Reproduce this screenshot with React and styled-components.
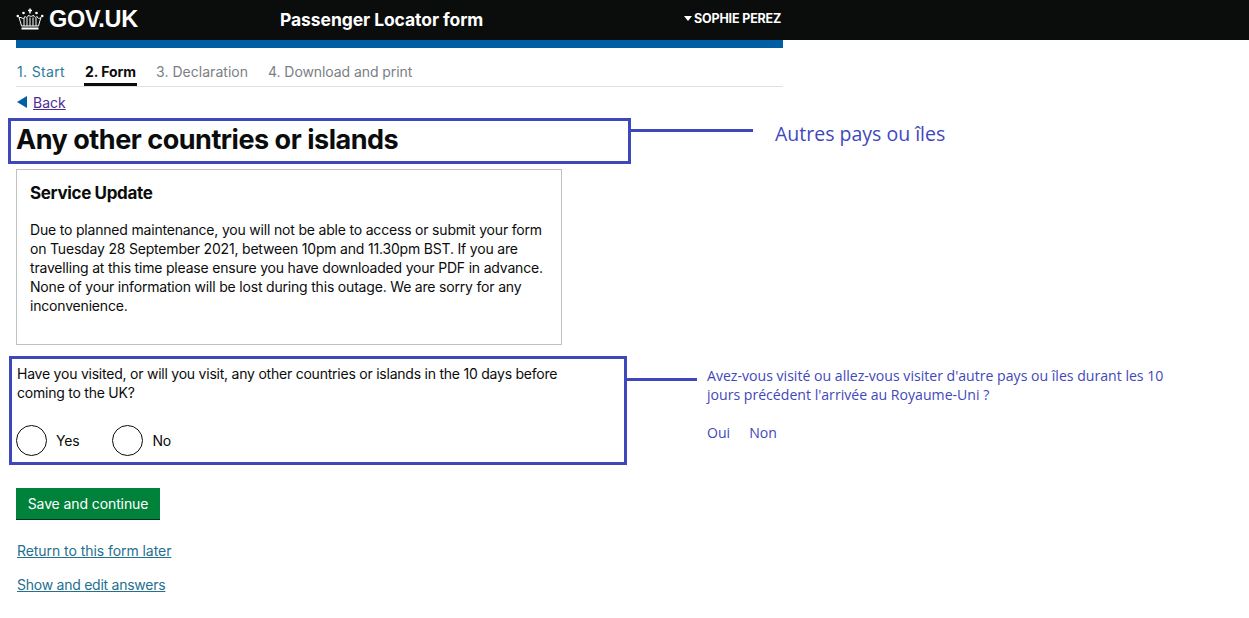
import styled, { createGlobalStyle } from "styled-components";

const GlobalStyle = createGlobalStyle`
  html, body { margin: 0; padding: 0; background: #fff; }
  body { font-family: "Inter", "Liberation Sans", sans-serif; color: #0b0c0c; }
`;

const Page = styled.div`
  position: relative;
  width: 1249px;
  height: 618px;
  overflow: hidden;
`;

const Header = styled.header`
  height: 40px;
  background: #0b0c0c;
  color: #fff;
  display: flex;
  align-items: center;
  padding-left: 16px;
`;

const Logo = styled.div`
  width: 264px;
  display: flex;
  align-items: center;
  gap: 5px;
  margin-top: -2px;
  font-family: "Liberation Sans", Arial, sans-serif;
  font-weight: 700;
  font-size: 23.5px;
  letter-spacing: -0.25px;
`;

const ServiceName = styled.div`
  width: 404px;
  margin-top: -2px;
  font-size: 17.5px;
  font-weight: 700;
  letter-spacing: -0.08px;
`;

const UserName = styled.div`
  display: flex;
  align-items: center;
  gap: 2px;
  margin-top: -3px;
  font-size: 12.5px;
  font-weight: 700;
  letter-spacing: -0.16px;
  &::before {
    content: "";
    border-left: 4.5px solid transparent;
    border-right: 4.5px solid transparent;
    border-top: 5px solid #fff;
  }
`;

const Content = styled.main`
  width: 767px;
  margin-left: 16px;
`;

const BlueBar = styled.div`
  height: 8px;
  background: #005ea5;
`;

const Steps = styled.nav`
  height: 38px;
  display: flex;
  gap: 18px;
  border-bottom: 1px solid #dee0e2;
`;

const Step = styled.span`
  height: 38px;
  box-sizing: border-box;
  padding: 15px 1px 0;
  font-size: 14px;
  line-height: 18px;
  letter-spacing: ${(p) => p.$spacing ?? -0.05}px;
  font-weight: ${(p) => (p.$current ? 700 : 400)};
  color: ${(p) => (p.$current ? "#0b0c0c" : p.$done ? "#2b7a9b" : "#7a8085")};
  border-bottom: ${(p) => (p.$current ? "3px solid #0b0c0c" : "none")};
`;

const BackLink = styled.a`
  display: flex;
  align-items: center;
  gap: 6px;
  margin-top: 6px;
  height: 18px;
  font-size: 14px;
  color: #4c2c92;
  span { text-decoration: underline; }
  &::before {
    content: "";
    margin-left: 1px;
    border-top: 6px solid transparent;
    border-bottom: 6px solid transparent;
    border-right: 10px solid #005ea5;
  }
`;

const Title = styled.h1`
  margin: 9px 0 0;
  height: 40px;
  font-size: 27px;
  line-height: 40px;
  font-weight: 700;
  letter-spacing: -0.47px;
`;

const NoticeBox = styled.section`
  box-sizing: border-box;
  width: 546px;
  height: 176px;
  margin-top: 9px;
  padding: 12px 13px 0;
  border: 1px solid #bfc1c3;
`;

const NoticeTitle = styled.h2`
  margin: 0 0 16px;
  font-size: 17px;
  line-height: 22px;
  font-weight: 700;
  letter-spacing: -0.35px;
`;

const NoticeText = styled.p`
  margin: 0;
  font-size: 14px;
  line-height: 19px;
  letter-spacing: -0.19px;
`;

const Question = styled.p`
  margin: 19px 0 0;
  padding-left: 1px;
  width: 575px;
  font-size: 14px;
  line-height: 19px;
  letter-spacing: -0.23px;
`;

const Radios = styled.div`
  display: flex;
  gap: 33px;
  margin-top: 22px;
`;

const RadioItem = styled.label`
  display: flex;
  align-items: center;
  gap: 9px;
  font-size: 14px;
  line-height: 30px;
  letter-spacing: -0.2px;
  span:last-child { padding-top: 2px; }
`;

const RadioCircle = styled.span`
  box-sizing: border-box;
  width: 31px;
  height: 31px;
  border: 1.5px solid #0b0c0c;
  border-radius: 50%;
`;

const SaveButton = styled.button`
  display: block;
  width: 144px;
  height: 32px;
  margin-top: 32px;
  padding: 0;
  border: 0;
  border-bottom: 1px solid #003618;
  background: #00823b;
  color: #fff;
  font-family: inherit;
  font-size: 14px;
  letter-spacing: -0.1px;
`;

const FormLink = styled.a`
  display: block;
  margin-top: ${(p) => p.$top}px;
  padding-left: 1px;
  font-size: 14px;
  line-height: 18px;
  letter-spacing: ${(p) => p.$spacing}px;
  color: #23708f;
  text-decoration: underline;
`;

const Highlight = styled.div`
  position: absolute;
  box-sizing: border-box;
  left: ${(p) => p.$x}px;
  top: ${(p) => p.$y}px;
  width: ${(p) => p.$w}px;
  height: ${(p) => p.$h}px;
  border: 3px solid #3f48bb;
`;

const Connector = styled.div`
  position: absolute;
  left: ${(p) => p.$x}px;
  top: ${(p) => p.$y}px;
  width: ${(p) => p.$w}px;
  height: 3px;
  background: #3f48bb;
`;

const Note = styled.div`
  position: absolute;
  left: ${(p) => p.$x}px;
  top: ${(p) => p.$y}px;
  width: ${(p) => p.$w || 480}px;
  font-family: "Open Sans", "Noto Sans", sans-serif;
  font-size: ${(p) => p.$size}px;
  line-height: ${(p) => p.$line}px;
  color: #3f48bb;
`;

const NoteOptions = styled.div`
  display: flex;
  gap: 19px;
  margin-top: 19px;
`;

const Crown = () => (
  <svg width="28" height="22" viewBox="0 0 28 22" fill="none" stroke="#fff" strokeWidth="1">
    <path d="M14 0.500v5M12 2.500h4" strokeWidth="1.500" />
    <path d="M3 9.500c1 3 2 6 2.500 8.500h17c.5-2.500 1.500-5.500 2.500-8.500-1.500 1.500-3.500 1-4-1-1 1.500-3 1-3.500-1.500-.8 1-1.500 1.300-2.500 1.300s-1.700-.3-2.500-1.300c-.5 2.500-2.500 3-3.500 1.500-.5 2-2.500 2.500-4 1z" />
    <path d="M8 10v8M11 9.500v8.500M14 9.500v8.500M17 9.500v8.500M20 10v8" />
    <path d="M5.500 20.500h17" strokeWidth="2" />
    <circle cx="1.800" cy="8" r="1.300" fill="#fff" stroke="none" />
    <circle cx="26.200" cy="8" r="1.300" fill="#fff" stroke="none" />
    <circle cx="7.500" cy="5" r="1.300" fill="#fff" stroke="none" />
    <circle cx="20.500" cy="5" r="1.300" fill="#fff" stroke="none" />
  </svg>
);

export default function App() {
  return (
    <Page>
      <GlobalStyle />
      <Header>
        <Logo>
          <Crown />
          GOV.UK
        </Logo>
        <ServiceName>Passenger Locator form</ServiceName>
        <UserName>SOPHIE PEREZ</UserName>
      </Header>
      <Content>
        <BlueBar />
        <Steps>
          <Step $done $spacing={0.35}>1. Start</Step>
          <Step $current>2. Form</Step>
          <Step $spacing={0.03}>3. Declaration</Step>
          <Step $spacing={-0.08}>4. Download and print</Step>
        </Steps>
        <BackLink>
          <span>Back</span>
        </BackLink>
        <Title>Any other countries or islands</Title>
        <NoticeBox>
          <NoticeTitle>Service Update</NoticeTitle>
          <NoticeText>
            Due to planned maintenance, you will not be able to access or submit your form
            <br />
            on Tuesday 28 September 2021, between 10pm and 11.30pm BST. If you are
            <br />
            travelling at this time please ensure you have downloaded your PDF in advance.
            <br />
            None of your information will be lost during this outage. We are sorry for any
            <br />
            inconvenience.
          </NoticeText>
        </NoticeBox>
        <Question>
          Have you visited, or will you visit, any other countries or islands in the 10 days before
          coming to the UK?
        </Question>
        <Radios>
          <RadioItem>
            <RadioCircle />
            <span>Yes</span>
          </RadioItem>
          <RadioItem>
            <RadioCircle />
            <span>No</span>
          </RadioItem>
        </Radios>
        <SaveButton>Save and continue</SaveButton>
        <FormLink $top={22} $spacing={-0.06}>Return to this form later</FormLink>
        <FormLink $top={16} $spacing={-0.25}>Show and edit answers</FormLink>
      </Content>

      <Highlight $x={8} $y={118} $w={623} $h={46} />
      <Connector $x={630} $y={129} $w={123} />
      <Note $x={775} $y={121} $size={19.500} $line={25}>
        Autres pays ou îles
      </Note>

      <Highlight $x={9} $y={356} $w={618} $h={109} />
      <Connector $x={626} $y={378} $w={71} />
      <Note $x={707} $y={366} $w={500} $size={14.100} $line={19}>
        Avez-vous visité ou allez-vous visiter d'autre pays ou îles durant les 10
        <br />
        jours précédent l'arrivée au Royaume-Uni ?
        <NoteOptions>
          <span>Oui</span>
          <span>Non</span>
        </NoteOptions>
      </Note>
    </Page>
  );
}
